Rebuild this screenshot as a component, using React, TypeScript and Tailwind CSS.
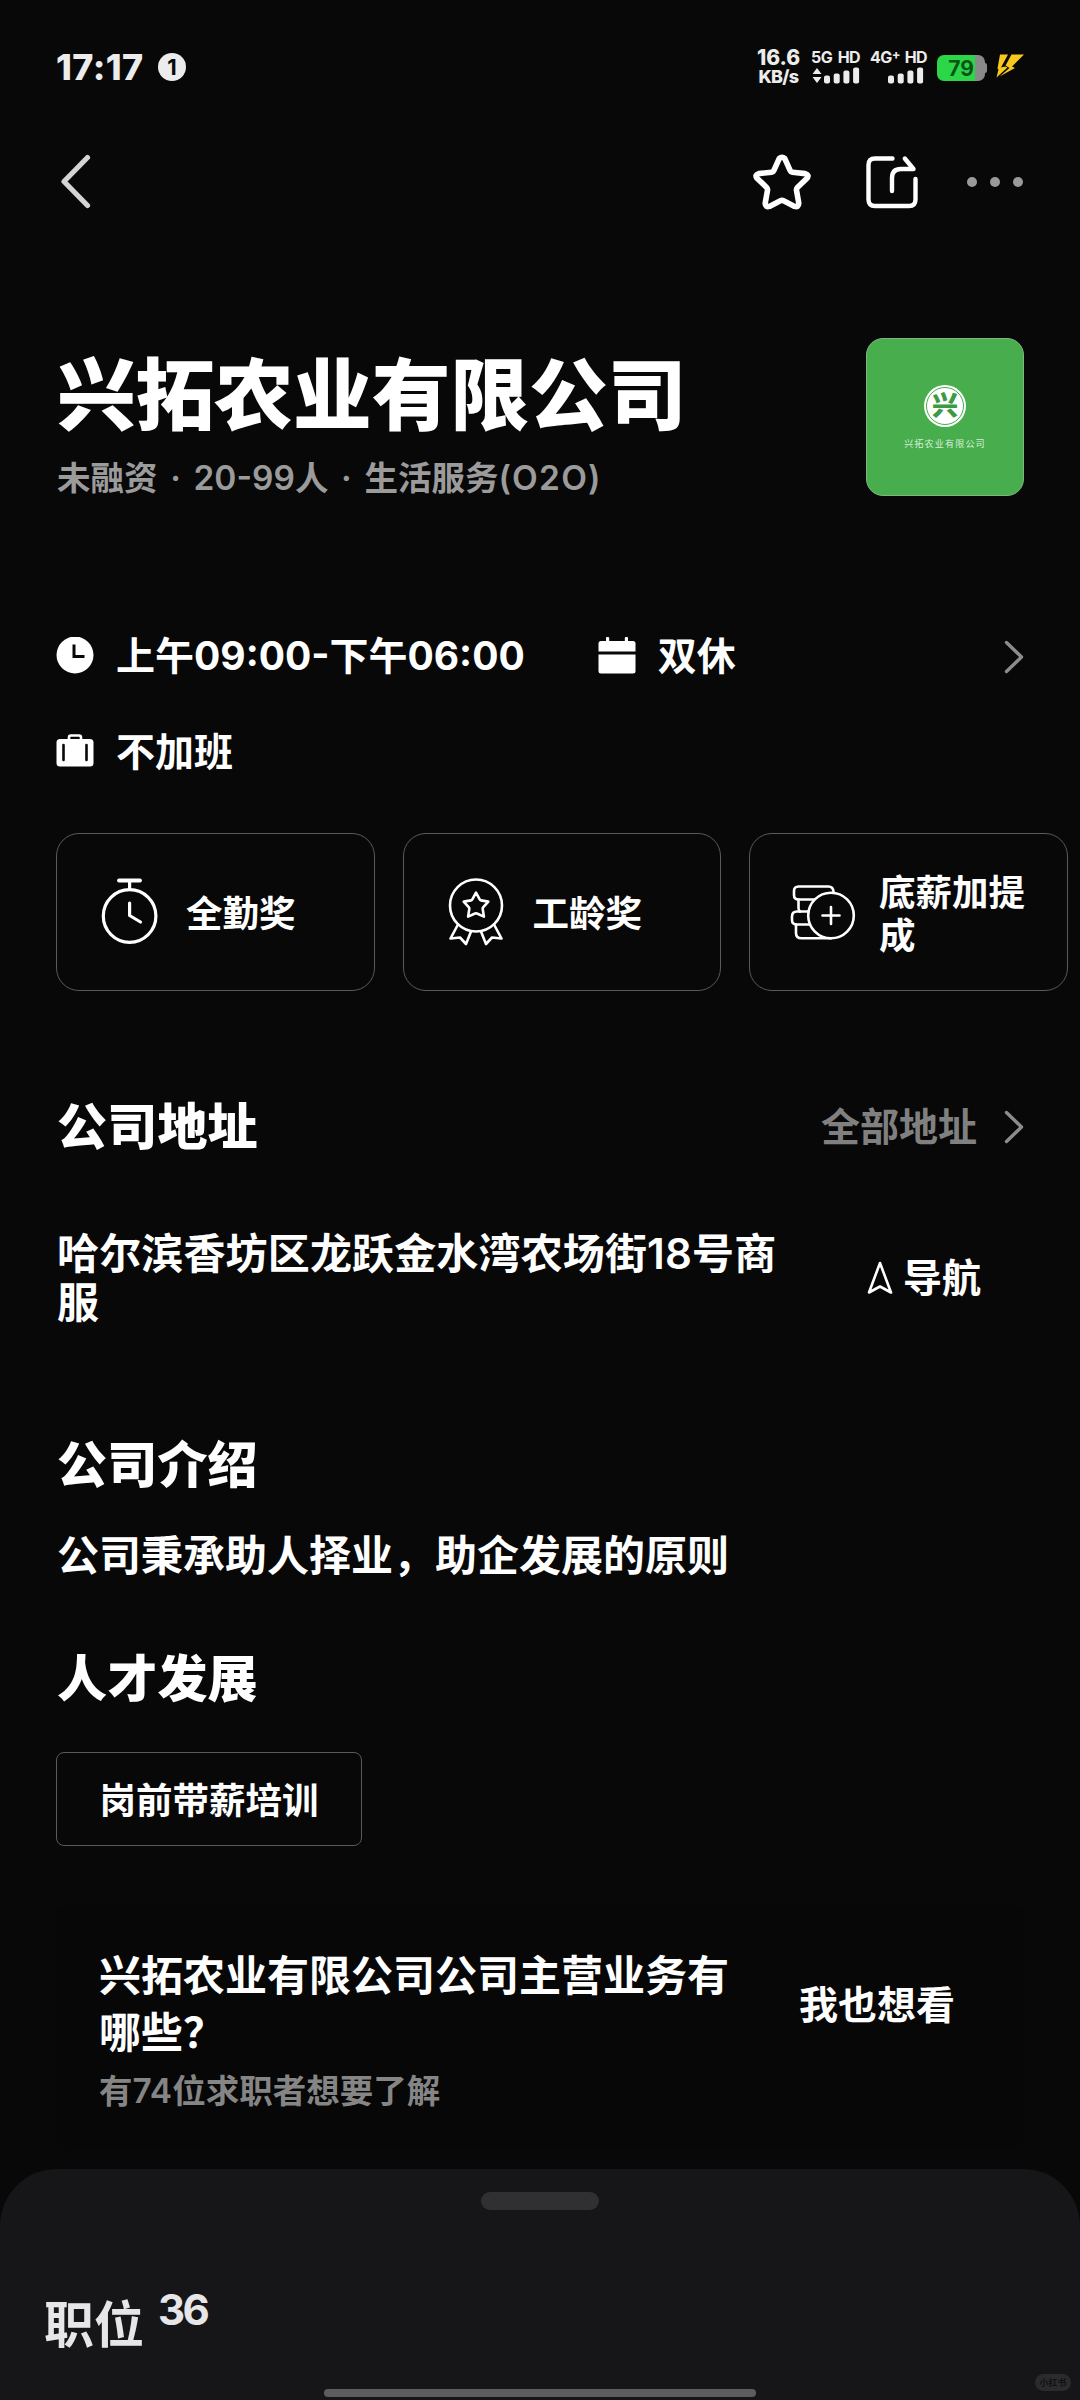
import type { ReactNode } from "react";

const benefits = [
  { id: "attendance", label: "全勤奖", icon: <StopwatchIcon /> },
  { id: "seniority", label: "工龄奖", icon: <MedalIcon /> },
  { id: "commission", label: "底薪加提成", icon: <CoinsIcon /> },
];

function BackIcon() {
  return (
    <svg width="30" height="58" viewBox="0 0 30 58" fill="none" stroke="#d4d4d6" strokeWidth="5.2" strokeLinecap="round" strokeLinejoin="round">
      <path d="M26.5 4.500 L3 28.500 L26.5 52.500" />
    </svg>
  );
}

function ChevronIcon() {
  return (
    <svg width="20" height="34" viewBox="0 0 20 34" fill="none" stroke="#8c8c8c" strokeWidth="3.4" strokeLinecap="round" strokeLinejoin="round">
      <path d="M2.5 2.5 L17.5 17 L2.5 31.5" />
    </svg>
  );
}

function StarIcon() {
  return (
    <svg width="58" height="56" viewBox="0 0 58 56" fill="none" stroke="#fff" strokeWidth="5.6" strokeLinejoin="round">
      <path d="M26.2 4.6 Q29 1.8 31.8 4.6 L37.2 16.6 Q37.8 18 39.4 18.2 L52.4 19.6 Q56.6 20.8 54 24.2 L44.4 33.4 Q43.2 34.6 43.5 36.2 L45.8 49.2 Q45.6 53.6 41.6 52.4 L30.6 46.8 Q29 46 27.4 46.8 L16.4 52.4 Q12.4 53.6 12.2 49.2 L14.5 36.2 Q14.8 34.6 13.6 33.4 L4 24.2 Q1.4 20.8 5.6 19.6 L18.6 18.2 Q20.2 18 20.8 16.6 Z" />
    </svg>
  );
}

function ShareIcon() {
  return (
    <svg width="52" height="54" viewBox="0 0 52 54" fill="none" stroke="#fff" strokeWidth="4.4" strokeLinecap="round" strokeLinejoin="round">
      <path d="M26.5 3.5 H9 Q2.5 3.5 2.5 10 V44.5 Q2.5 51 9 51 H43 Q49.5 51 49.5 44.5 V24" />
      <path d="M26 36 V23 Q26 14 35 14 H47.5 L38.8 3.5" />
    </svg>
  );
}

function ClockIcon() {
  return (
    <svg width="38" height="38" viewBox="0 0 38 38">
      <circle cx="19" cy="18" r="18.5" fill="#fff" />
      <path d="M18 7.5 V19.500 H28.5" fill="none" stroke="#080808" strokeWidth="3" />
    </svg>
  );
}

function CalendarIcon() {
  return (
    <svg width="38" height="38" viewBox="0 0 38 38" fill="#fff">
      <rect x="8" y="0" width="3.2" height="8" rx="1" />
      <rect x="26.8" y="0" width="3.2" height="8" rx="1" />
      <path d="M3 4 H35 Q37.5 4 37.5 6.500 V14.500 H0.5 V6.500 Q0.5 4 3 4 Z" />
      <path d="M0.5 17.5 H37.5 V34 Q37.5 36.500 35 36.500 H3 Q0.5 36.500 0.5 34 Z" />
    </svg>
  );
}

function SuitcaseIcon() {
  return (
    <svg width="38" height="38" viewBox="0 0 38 38">
      <path d="M13 7 V4.500 Q13 2.500 15 2.500 H23 Q25 2.500 25 4.500 V7" fill="none" stroke="#fff" strokeWidth="2.6" />
      <rect x="0.5" y="6" width="37" height="27.500" rx="3.500" fill="#fff" />
      <path d="M7.500 12 V27 M30.500 12 V27" stroke="#080808" strokeWidth="2.6" strokeLinecap="round" />
    </svg>
  );
}

function StopwatchIcon() {
  return (
    <svg width="66" height="70" viewBox="0 0 66 70" fill="none" stroke="#fff" strokeWidth="3.200" strokeLinecap="round" strokeLinejoin="round">
      <path d="M22 3.500 H43" strokeWidth="3.800" />
      <path d="M32.600 4 V12" />
      <circle cx="32.600" cy="39" r="26.300" />
      <path d="M32.600 26 V38.500 L43.500 45" />
    </svg>
  );
}

function MedalIcon() {
  return (
    <svg width="66" height="70" viewBox="0 0 66 70" fill="none" stroke="#fff" strokeWidth="2.600" strokeLinecap="round" strokeLinejoin="round">
      <circle cx="32" cy="28.500" r="26" />
      <path d="M32 15.600 L35.700 22.400 Q36.100 23.200 37 23.400 L44.300 24.600 L39.100 30.400 Q38.500 31 38.700 32 L39.900 39.600 L33 36.500 Q32 36 31 36.500 L24.100 39.600 L25.300 32 Q25.500 31 24.900 30.400 L19.700 24.600 L27 23.400 Q27.900 23.200 28.300 22.400 Z" />
      <path d="M14 47.500 L6.500 61.500 L16 60.500 L22 67 L27 54.500" />
      <path d="M50 47.500 L57.500 61.500 L48 60.500 L42 67 L37 54.500" />
    </svg>
  );
}

function CoinsIcon() {
  return (
    <svg width="66" height="70" viewBox="0 0 66 70" fill="none" stroke="#fff" strokeWidth="2.600" strokeLinecap="round" strokeLinejoin="round">
      <circle cx="41" cy="38.500" r="22.800" />
      <path d="M32.500 38.500 H49.500 M41 30 V47" />
      <path d="M43.500 14.500 Q43 9.500 38.500 9.500 H8.500 Q4 9.500 4 14 V18 Q4 22.500 8.500 22.500 H24" />
      <path d="M8.500 22.500 V31 Q8.500 33 10 34.500" />
      <path d="M18.500 34.500 H7 Q2 34.500 2 39.500 V43 Q2 47.500 7 47.500 H20" />
      <path d="M6 47.500 V56 Q6 61.300 11.500 61.300 H41" />
    </svg>
  );
}

function NavigateIcon() {
  return (
    <svg width="26" height="34" viewBox="0 0 26 34" fill="none" stroke="#fff" strokeWidth="2.600" strokeLinejoin="round">
      <path d="M13 2 L24 31.500 L13 25.500 L2 31.500 Z" />
    </svg>
  );
}

function SignalBars() {
  return (
    <svg width="36" height="17" viewBox="0 0 36 17" fill="#ececec">
      <rect x="0" y="8.500" width="6" height="8" rx="2" />
      <rect x="9.700" y="6.500" width="6" height="10" rx="2" />
      <rect x="19.400" y="3.500" width="6" height="13" rx="2" />
      <rect x="29.100" y="0.500" width="6" height="16" rx="2" />
    </svg>
  );
}

function StatusBar() {
  return (
    <div className="flex h-[134px] items-center justify-between pr-14 pl-[56px] text-[#ececec]">
      <div className="flex items-center">
        <span className="w-[102px] text-[36px] leading-none font-extrabold tracking-[0.4px]">17:17</span>
        <span className="flex h-7 w-7 items-center justify-center rounded-full bg-[#ececec] text-[22px] leading-none font-bold text-[#080808]">
          1
        </span>
      </div>
      <div className="flex items-center">
        <div className="mr-[11px] w-[43px] text-center font-extrabold">
          <div className="text-[21px] leading-[19px]">16.6</div>
          <div className="text-[18px] leading-[20px] tracking-[-0.7px]">KB/s</div>
        </div>
        <div className="mr-2.5 w-[49px]">
          <div className="flex justify-between text-[16px] leading-[15px] font-bold tracking-[-0.6px]">
            <span>5G</span>
            <span>HD</span>
          </div>
          <div className="flex items-center justify-end gap-[2px] pt-[2px]">
            <svg width="10" height="17" viewBox="0 0 10 17" fill="#ececec">
              <path d="M5 1 L9.500 7 H0.500 Z M5 16 L9.500 10 H0.500 Z" />
            </svg>
            <SignalBars />
          </div>
        </div>
        <div className="mr-2.5 w-[57px]">
          <div className="flex justify-between text-[16px] leading-[15px] font-bold tracking-[-0.6px]">
            <span className="flex">
              4G<span className="-mt-[3px] text-[13px]">+</span>
            </span>
            <span>HD</span>
          </div>
          <div className="flex justify-end pt-[2px] pr-[3px]">
            <SignalBars />
          </div>
        </div>
        <div className="mt-0.5 mr-[9px] flex items-center">
          <div className="flex h-[26px] w-12 items-center justify-center rounded-[7px] bg-linear-to-r from-[#2bd748] from-80% to-[#8a8a8a] to-80% text-[21px] leading-none font-bold text-[#0a5415]">
            79
          </div>
          <div className="h-2.5 w-[2px] rounded-r bg-[#8a8a8a]" />
        </div>
        <svg className="-mt-0.5" width="28" height="24" viewBox="0 0 28 24" fill="#f8c81c">
          <path d="M4 0.500 H12 L5 13.500 L9 12.500 L11.500 13.500 L0.500 23.500 L2.500 15.500 L1.500 14.500 Z" />
          <path d="M15.500 0.500 H28 L16 12.500 L19 14 L3.500 22.500 L13.500 14 L9.500 11.500 Z" />
        </svg>
      </div>
    </div>
  );
}

function NavBar() {
  return (
    <div className="flex h-24 items-center pr-[57px] pb-px pl-[61px]">
      <button aria-label="返回">
        <BackIcon />
      </button>
      <button aria-label="收藏" className="ml-auto">
        <StarIcon />
      </button>
      <button aria-label="分享" className="ml-[55px]">
        <ShareIcon />
      </button>
      <button aria-label="更多" className="ml-[49px] flex gap-[13px]">
        <span className="h-2.5 w-2.5 rounded-full bg-[#9a9a9a]" />
        <span className="h-2.5 w-2.5 rounded-full bg-[#9a9a9a]" />
        <span className="h-2.5 w-2.5 rounded-full bg-[#9a9a9a]" />
      </button>
    </div>
  );
}

function CompanyLogo() {
  return (
    <div className="flex h-[158px] w-[158px] shrink-0 flex-col items-center rounded-[17px] border border-[#7fb583] bg-[#48ad4d] pt-[46px]">
      <div className="flex h-[42px] w-[42px] items-center justify-center rounded-full bg-white">
        <div className="flex h-[38px] w-[38px] items-center justify-center rounded-full border border-[#48ad4d] text-[26px] leading-none font-black text-[#3c9a45]">
          兴
        </div>
      </div>
      <div className="mt-[11px] text-[9px] leading-3 tracking-[1.2px] whitespace-nowrap text-[#d6efd7]">
        兴拓农业有限公司
      </div>
    </div>
  );
}

function Heading({ children }: { children: ReactNode }) {
  return <h2 className="pt-px pl-px text-[50px] leading-[69px] font-black tracking-[0.2px]">{children}</h2>;
}

function Dot() {
  return <span className="inline-block w-9 text-center">·</span>;
}

function PerkItem({ icon, label }: { icon: ReactNode; label: string }) {
  return (
    <div className="flex items-center gap-[22px]">
      {icon}
      <span className="text-[39px] leading-[60px] font-bold whitespace-nowrap">{label}</span>
    </div>
  );
}

export default function App() {
  return (
    <div className="flex h-[2400px] w-[1080px] flex-col overflow-hidden bg-[#080808] font-['Inter','Noto_Sans_CJK_SC',sans-serif] text-white">
      <StatusBar />
      <NavBar />

      <header className="mt-[108px] flex h-[158px] justify-between px-14">
        <div className="pt-[13px] pl-px">
          <h1 className="text-[78.7px] leading-[90px] font-black whitespace-nowrap">兴拓农业有限公司</h1>
          <p className="mt-3.5 text-[33.5px] leading-[46px] font-semibold whitespace-nowrap text-[#9b9b9b]">
            未融资
            <Dot />
            20-99人
            <Dot />
            生活服务<span className="tracking-[1.2px]">(O2O)</span>
          </p>
        </div>
        <CompanyLogo />
      </header>

      <section className="mt-[130px] flex items-start px-14">
        <div className="flex flex-1 flex-col gap-9">
          <div className="flex gap-[73px]">
            <PerkItem icon={<ClockIcon />} label="上午09:00-下午06:00" />
            <PerkItem icon={<CalendarIcon />} label="双休" />
          </div>
          <PerkItem icon={<SuitcaseIcon />} label="不加班" />
        </div>
        <div className="flex h-[62px] items-center">
          <ChevronIcon />
        </div>
      </section>

      <section className="mt-[51px] flex gap-7 pl-14">
        {benefits.map((b) => (
          <div
            key={b.id}
            className="flex h-[158px] w-[318.5px] shrink-0 items-center gap-[23px] rounded-[23px] border border-[#5a5a5a] pr-8 pl-10"
          >
            <div className="shrink-0">{b.icon}</div>
            <span className="pt-[5px] text-[36.500px] leading-[43px] font-bold">{b.label}</span>
          </div>
        ))}
      </section>

      <section className="mt-[101px] px-14">
        <div className="flex items-center justify-between">
          <Heading>公司地址</Heading>
          <div className="flex items-center gap-[27px] text-[39px] text-[#808080]">
            <span className="font-semibold">全部地址</span>
            <ChevronIcon />
          </div>
        </div>
        <div className="mt-[67px] flex items-center justify-between pr-[43px] pl-px">
          <p className="w-[730px] text-[42px] leading-[49px] font-semibold tracking-[0.15px]">
            哈尔滨香坊区龙跃金水湾农场街18号商服
          </p>
          <button className="flex items-center gap-2.5 text-[39px] font-bold">
            <NavigateIcon />
            导航
          </button>
        </div>
      </section>

      <section className="mt-[103px] px-14">
        <Heading>公司介绍</Heading>
        <p className="mt-[31px] pl-px text-[42px] leading-[50px] font-semibold">公司秉承助人择业，助企发展的原则</p>
      </section>

      <section className="mt-[63px] px-14">
        <Heading>人才发展</Heading>
        <div className="mt-[38px] flex">
          <span className="flex h-[94px] w-[306px] items-center justify-center rounded-lg border border-[#5a5a5a] pt-[5px] text-[36.500px] font-semibold">
            岗前带薪培训
          </span>
        </div>
      </section>

      <section className="mx-14 mt-[59px] flex h-[245px] justify-between rounded-2xl bg-[#070707] pt-[42px] pr-[69px] pl-[43px]">
        <div>
          <p className="w-[640px] text-[42px] leading-[57px] font-semibold">兴拓农业有限公司公司主营业务有哪些？</p>
          <p className="mt-[7px] text-[33.500px] leading-[46px] font-semibold text-[#858585]">有74位求职者想要了解</p>
        </div>
        <button className="h-[116px] text-[39px] font-bold">我也想看</button>
      </section>

      <section className="mt-[19px] flex h-[231px] flex-col rounded-t-[57px] bg-[#161618] text-[#e6e6e8]">
        <div className="mx-auto mt-[23px] h-[18px] w-[118px] rounded-full bg-[#303032]" />
        <div className="mt-[73px] flex h-[76px] items-start pl-11">
          <span className="pt-1 text-[50px] leading-[76px] font-bold">职位</span>
          <span className="ml-3.5 text-[42px] leading-[54px] font-bold tracking-[-2.5px]">36</span>
        </div>
        <div className="mt-auto flex items-end pb-[3px]">
          <div className="ml-[324px] h-2 w-[432px] rounded-full bg-[#5d5d5d]" />
          <div className="mb-1.5 ml-[279px] flex h-[17px] w-9 items-center justify-center rounded-full bg-[#2b2b2d] text-[9px] leading-none font-bold text-[#111]">
            小红书
          </div>
        </div>
      </section>
    </div>
  );
}
